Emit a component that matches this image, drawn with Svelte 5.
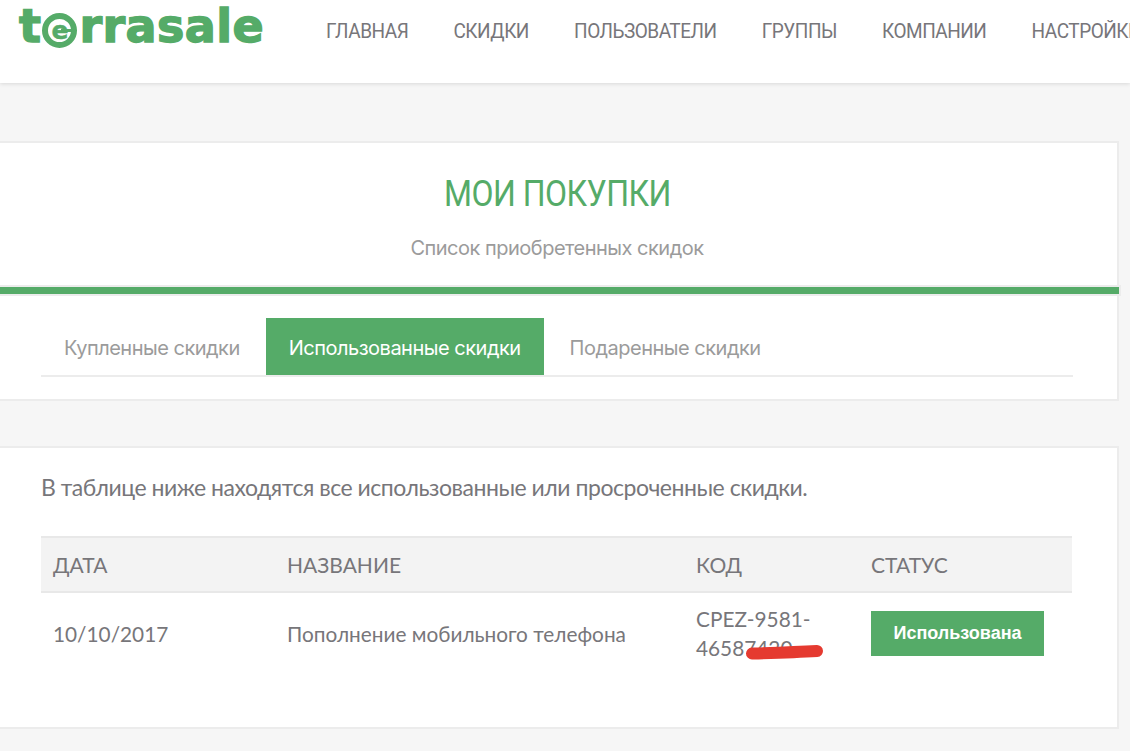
<script>
  const nav = ['Главная', 'Скидки', 'Пользователи', 'Группы', 'Компании', 'Настройки'];
  const tabs = ['Купленные скидки', 'Использованные скидки', 'Подаренные скидки'];
  let activeTab = 1;
</script>

<div class="page">
  <header class="topbar">
    <a class="logo" href="#top">t<span class="logo-e">e</span>rrasale</a>
    <nav class="menu">
      {#each nav as item}
        <a href="#top">{item}</a>
      {/each}
    </nav>
  </header>

  <main class="content">
    <section class="card head-card">
      <div class="title-block">
        <h1><span>Мои покупки</span></h1>
        <p>Список приобретенных скидок</p>
      </div>
      <div class="green-bar"></div>
      <div class="tabs">
        {#each tabs as tab, i}
          <button class:active={i === activeTab} on:click={() => (activeTab = i)}>{tab}</button>
        {/each}
      </div>
    </section>

    <section class="card table-card">
      <p class="intro">В таблице ниже находятся все использованные или просроченные скидки.</p>
      <table>
        <thead>
          <tr>
            <th class="c-date">Дата</th>
            <th class="c-name">Название</th>
            <th class="c-code">Код</th>
            <th>Статус</th>
          </tr>
        </thead>
        <tbody>
          <tr>
            <td>10/10/2017</td>
            <td>Пополнение мобильного телефона</td>
            <td class="code">
              CPEZ-9581-46587420
              <svg class="scribble" width="80" height="20" viewBox="0 0 80 20">
                <path d="M7 12.5 C25 12, 55 11, 72 10" fill="none" stroke="#e53a30" stroke-width="12" stroke-linecap="round" />
              </svg>
            </td>
            <td><span class="status">Использована</span></td>
          </tr>
        </tbody>
      </table>
    </section>
  </main>
</div>

<style>
  :global(body) {
    background: #f6f6f6;
    overflow: hidden;
  }

  .page {
    height: 751px;
    overflow: hidden;
    font-family: Lato, "Noto Sans", sans-serif;
    color: #77767a;
  }

  .topbar {
    display: flex;
    height: 83px;
    background: #fff;
    box-shadow: 0 1px 4px rgba(0, 0, 0, 0.12);
    white-space: nowrap;
    overflow: hidden;
  }

  .logo {
    display: flex;
    align-items: center;
    flex: none;
    height: 52px;
    width: 326px;
    padding-left: 19px;
    box-sizing: border-box;
    font-family: "DejaVu Sans", sans-serif;
    font-weight: 700;
    font-size: 46px;
    letter-spacing: 0.4px;
    -webkit-text-stroke: 1.4px #55ab68;
    color: #55ab68;
    text-decoration: none;
  }

  .logo-e {
    position: relative;
    display: inline-flex;
    align-items: center;
    justify-content: center;
    flex: none;
    width: 35px;
    height: 35px;
    margin: 8px 2px 0 1px;
    border: 6px solid #55ab68;
    border-radius: 50%;
    box-sizing: border-box;
    font-size: 25px;
    letter-spacing: 0;
    -webkit-text-stroke: 0.5px #55ab68;
  }

  .logo-e::after {
    content: '';
    position: absolute;
    right: -1px;
    top: 10px;
    width: 11px;
    height: 3px;
    background: #55ab68;
  }

  /* Roboto has no condensed cut installed, so squeeze it */
  .menu {
    display: flex;
    flex: none;
    gap: 47.5px;
    height: 62px;
    align-items: center;
    transform: scaleX(0.95);
    transform-origin: left center;
  }

  .menu a {
    font-family: Roboto, sans-serif;
    font-size: 20px;
    letter-spacing: -0.5px;
    text-transform: uppercase;
    color: #77767a;
    text-decoration: none;
  }

  .content {
    margin-right: 11px;
    padding-top: 58px;
  }

  .card {
    background: #fff;
    border: 2px solid #ececec;
    border-left: none;
  }

  .head-card {
    height: 260px;
    box-sizing: border-box;
  }

  .title-block {
    height: 144px;
    padding-right: 3px;
    box-sizing: border-box;
    text-align: center;
  }

  h1 {
    margin: 0;
    padding-top: 30px;
    font-family: Roboto, sans-serif;
    font-weight: 400;
    font-size: 36px;
    line-height: 42px;
    letter-spacing: -0.6px;
    text-transform: uppercase;
    color: #55ab68;
  }

  h1 span {
    display: inline-block;
    transform: scaleX(0.89);
  }

  .title-block p {
    margin: 21px 0 0;
    font-family: Inter, sans-serif;
    font-size: 20px;
    letter-spacing: -0.5px;
    line-height: 24px;
    color: #9b9b9b;
  }

  .green-bar {
    height: 7px;
    margin-right: -2px;
    background: #55ab68;
    box-shadow: 0 0 0 2px #ececec;
  }

  .tabs {
    display: flex;
    gap: 3px;
    margin: 24px 44px 0 41px;
    border-bottom: 2px solid #ececec;
  }

  .tabs button {
    height: 57px;
    padding: 3px 23px 0;
    border: none;
    background: none;
    font-family: Inter, sans-serif;
    font-size: 20px;
    letter-spacing: -0.5px;
    color: #9b9b9b;
  }

  .tabs button.active {
    background: #55ab68;
    color: #fff;
  }

  .table-card {
    height: 283px;
    box-sizing: border-box;
    margin-top: 45px;
    padding: 0 45px 0 41px;
  }

  .intro {
    margin: 0;
    padding-top: 24px;
    height: 88px;
    box-sizing: border-box;
    font-size: 23px;
    line-height: 30px;
    letter-spacing: -0.47px;
  }

  table {
    width: 1031px;
    table-layout: fixed;
    border-collapse: collapse;
    font-size: 21px;
  }

  thead tr {
    background: #f3f3f3;
    border-top: 2px solid #e8e8e8;
    border-bottom: 2px solid #e8e8e8;
  }

  th {
    height: 53px;
    padding: 0 12px;
    font-weight: 400;
    text-align: left;
    text-transform: uppercase;
  }

  .c-date {
    width: 210px;
  }

  .c-name {
    width: 385px;
  }

  .c-code {
    width: 151px;
  }

  td {
    height: 80px;
    padding: 0 12px;
    font-size: 20.8px;
    line-height: 29px;
  }

  .code {
    position: relative;
  }

  .scribble {
    position: absolute;
    left: 61px;
    top: 48px;
  }

  .status {
    display: block;
    width: 173px;
    height: 45px;
    background: #55ab68;
    font-family: "Liberation Sans", Arial, sans-serif;
    font-weight: 700;
    font-size: 18px;
    line-height: 45px;
    text-align: center;
    color: #fff;
  }
</style>
